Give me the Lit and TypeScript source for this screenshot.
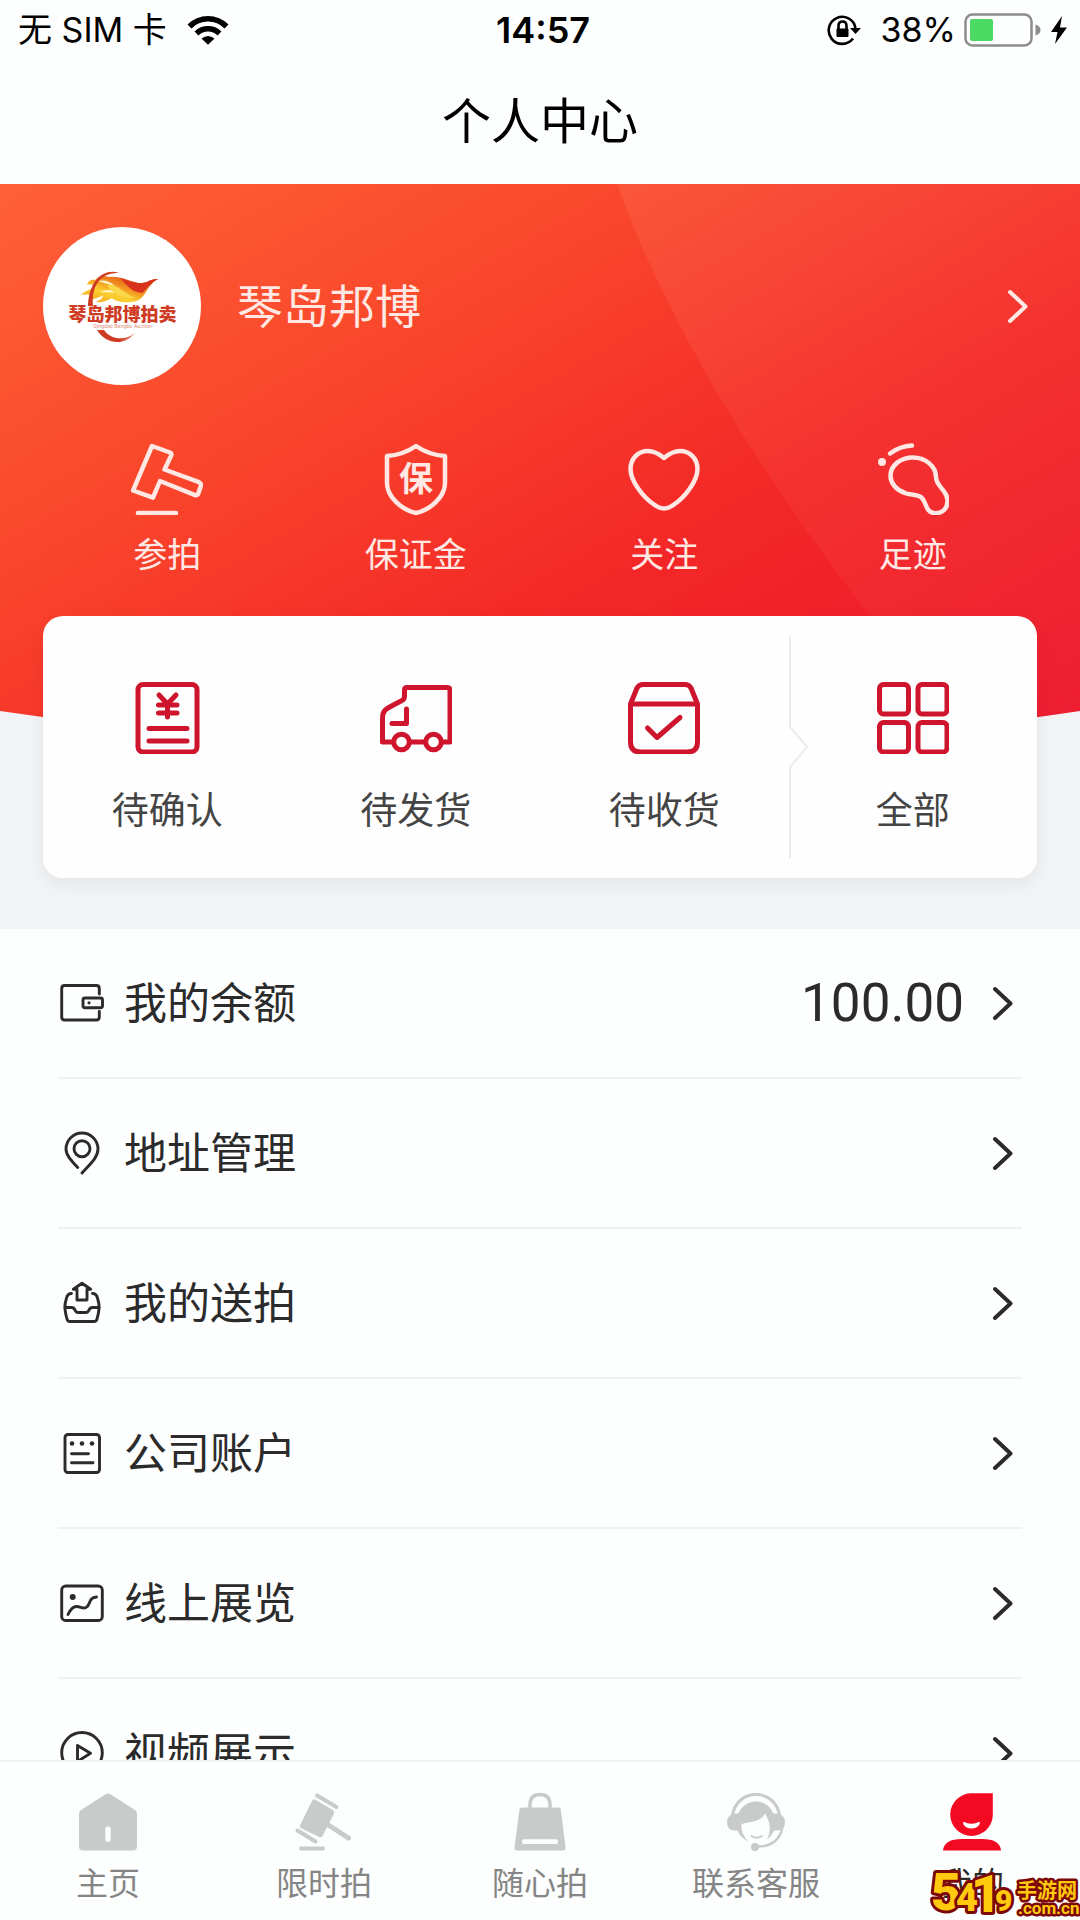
import { LitElement, html, css, TemplateResult } from "lit";
import { customElement, property } from "lit/decorators.js";
import { classMap } from "lit/directives/class-map.js";

interface Entry {
  label: string;
  icon: TemplateResult;
  value?: string;
  active?: boolean;
}

const shortcuts: Entry[] = [
  {
    label: "参拍",
    icon: html`<svg class="icon" viewBox="0 0 72 72" aria-hidden="true">
      <path d="M21 3L39 9.500Q41 10.500 40.200 12.500L33.500 26.500L68 39.200Q70.500 40.500 69.800 43L67.500 50Q66.500 53 63.500 51.800L29 38L22 54.700L2 47.500Z" />
      <path d="M7 70H45" />
    </svg>`,
  },
  {
    label: "保证金",
    icon: html`<svg class="icon" viewBox="0 0 72 72" aria-hidden="true">
      <path d="M36 3Q49 12 65 13V40C65 54 50 67 36 70C22 67 7 54 7 40V13Q23 12 36 3Z" />
      <text class="shield-text" x="36" y="48" text-anchor="middle">保</text>
    </svg>`,
  },
  {
    label: "关注",
    icon: html`<svg class="icon" viewBox="0 0 72 72" aria-hidden="true">
      <path d="M36 15C30 10 25 8 20 8C10 8 2.500 15.500 2.500 26C2.500 38 15 54 26 61.500C30 64.500 33 65.500 36 65.500C39 65.500 42 64.500 46 61.500C57 54 69.500 38 69.500 26C69.500 15.500 62 8 52 8C47 8 42 10 36 15Z" />
    </svg>`,
  },
  {
    label: "足迹",
    icon: html`<svg class="icon" viewBox="0 0 72 72" aria-hidden="true">
      <circle class="solid" cx="5" cy="19" r="4" />
      <path d="M13 10.500Q23 3 35 2.500" />
      <path d="M36 14.500C48 14.500 59 23 59 34C59 44 71 47 70.500 59C70 66 65 70.500 58 70.300C47 69 50 57 43 53.500C38 51 33 52 28 50C19 47 13.500 40 13.500 33C13.500 22 24 14.500 36 14.500Z" />
    </svg>`,
  },
];

const orders: Entry[] = [
  {
    label: "待确认",
    icon: html`<svg class="icon red" viewBox="0 0 72 72" aria-hidden="true">
      <rect x="7" y="2.500" width="59" height="67.500" rx="5" />
      <path d="M28 13L36.500 22L45 13M36.500 22V35M27.500 23H46M27.500 31H46M18 46.500H56M18 59H56" />
    </svg>`,
  },
  {
    label: "待发货",
    icon: html`<svg class="icon red" viewBox="0 0 72 72" aria-hidden="true">
      <path d="M13 60H2.500V36Q2.500 29 8 26Q15 22 22 18.500Q24.500 17.500 24.500 14V8Q24.500 5.500 27 5.500H67Q70 5.500 70 8.500V60H62M30 60H45" />
      <circle cx="21.500" cy="60" r="7.800" />
      <circle cx="53.500" cy="60" r="7.800" />
      <path d="M26.500 27V41.500H12" />
    </svg>`,
  },
  {
    label: "待收货",
    icon: html`<svg class="icon red" viewBox="0 0 72 72" aria-hidden="true">
      <path d="M2.500 22L9 6Q11 2.500 15 2.500H57Q61 2.500 63 6L69.500 22V60Q69.500 70 59.500 70H12.500Q2.500 70 2.500 60ZM2.500 22H69.500" />
      <path d="M19.500 46L29 55.500L52 35.500" />
    </svg>`,
  },
  {
    label: "全部",
    icon: html`<svg class="icon red" viewBox="0 0 72 72" aria-hidden="true">
      <rect x="2.500" y="2.500" width="29" height="29.500" rx="4" />
      <rect x="41" y="2.500" width="29" height="29.500" rx="4" />
      <rect x="2.500" y="40.500" width="29" height="29.500" rx="4" />
      <rect x="41" y="40.500" width="29" height="29.500" rx="4" />
    </svg>`,
  },
];

const menu: Entry[] = [
  {
    label: "我的余额",
    value: "100.00",
    icon: html`<svg class="icon" viewBox="0 0 44 44" aria-hidden="true">
      <path d="M39.300 13V7.500Q39.300 4.500 36.300 4.500H4.700Q1.700 4.500 1.700 7.500V36Q1.700 39 4.700 39H36.300Q39.300 39 39.300 36V30.500" />
      <rect x="23" y="17" width="19.500" height="9.800" rx="2" />
      <circle class="solid" cx="29" cy="21.800" r="1.600" />
    </svg>`,
  },
  {
    label: "地址管理",
    icon: html`<svg class="icon" viewBox="0 0 44 44" aria-hidden="true">
      <path d="M17.700 36.500C11 29.500 6 24 6 18A16 16 0 0 1 38 18C38 27 29 34 22 42" />
      <circle cx="22" cy="17.700" r="8" />
    </svg>`,
  },
  {
    label: "我的送拍",
    icon: html`<svg class="icon" viewBox="0 0 44 44" aria-hidden="true">
      <path d="M22 2.300L30.700 8.300H27V19H17V8.300H13.300Z" />
      <path d="M11.500 12.500Q7.500 12.500 6.500 17Q4.500 23 5 28Q5.500 33 7 38Q7.500 40.500 10 40.500H34Q36.500 40.500 37 38Q38.500 33 39 28Q39.500 23 37.500 17Q36.500 12.500 32.500 12.500" />
      <path d="M5 26.500H11.500Q14 26.500 15 29Q16 31.500 18 31.500H26Q28 31.500 29 29Q30 26.500 32.500 26.500H39" />
    </svg>`,
  },
  {
    label: "公司账户",
    icon: html`<svg class="icon" viewBox="0 0 44 44" aria-hidden="true">
      <rect x="5" y="3.500" width="34.500" height="38" rx="3" />
      <circle class="solid" cx="12" cy="12.500" r="2.300" />
      <circle class="solid" cx="22" cy="12.500" r="2.300" />
      <circle class="solid" cx="32" cy="12.500" r="2.300" />
      <path d="M11.500 22.700H28.500M11.500 31.700H33" />
    </svg>`,
  },
  {
    label: "线上展览",
    icon: html`<svg class="icon" viewBox="0 0 44 44" aria-hidden="true">
      <rect x="1.700" y="5" width="40.600" height="34.500" rx="4" />
      <circle class="solid" cx="12.700" cy="16" r="3" />
      <path d="M8 33.500Q12 25 17 25.500C20 25.800 22 28 26 26.500C31 24 28 16.500 36.500 16" />
    </svg>`,
  },
  {
    label: "视频展示",
    icon: html`<svg class="icon" viewBox="0 0 44 44" aria-hidden="true">
      <circle cx="22" cy="21.800" r="20.300" />
      <path d="M17.500 14.500L30.500 22.300L17.500 30.500Z" />
    </svg>`,
  },
];

const tabs: Entry[] = [
  {
    label: "主页",
    icon: html`<svg class="tab-icon" viewBox="0 0 60 60" aria-hidden="true">
      <path class="fill" fill-rule="evenodd" d="M28 2Q30 .8 32 2L57 18Q59 19.500 59 22V54.500Q59 58.500 55 58.500H5Q1 58.500 1 54.500V22Q1 19.500 3 18ZM30 34.500Q27.300 34.500 27.300 37V47.500Q27.300 50 30 50Q32.700 50 32.700 47.500V37Q32.700 34.500 30 34.500Z" />
    </svg>`,
  },
  {
    label: "限时拍",
    icon: html`<svg class="tab-icon" viewBox="0 0 60 60" aria-hidden="true">
      <path class="fill" d="M21 7.500L39 18Q41 19.300 40 21.500L28.500 44Q27.500 46 25.500 45L7.500 36.500Q5 35 6.200 33L18 9Q19 6.800 21 7.500Z" />
      <path class="line" stroke-width="4" d="M23 3.500L42.500 15M3.500 38.500L21.500 49.500M7 56.500H29" />
      <path class="line" stroke-width="5" d="M32 31.500L54.500 46" />
    </svg>`,
  },
  {
    label: "随心拍",
    icon: html`<svg class="tab-icon" viewBox="0 0 60 60" aria-hidden="true">
      <path class="line" stroke-width="3.500" d="M20 16V13Q20 2.500 30 2.500Q40 2.500 40 13V16" />
      <path class="fill" fill-rule="evenodd" d="M12 15.500H48.500Q50.500 15.500 50.800 17.500L55.500 55Q55.800 58.500 52.500 58.500H7.500Q4.200 58.500 4.500 55L9.500 17.500Q10 15.500 12 15.500ZM14 47.300Q12 47.300 12 49.500Q12 52 14 52H46Q48 52 48 49.500Q48 47.300 46 47.300Z" />
    </svg>`,
  },
  {
    label: "联系客服",
    icon: html`<svg class="tab-icon" viewBox="0 0 60 60" aria-hidden="true">
      <path class="line" stroke-width="3" d="M6 24C9 10 18 2.500 30 2.500C42 2.500 51 10 54 24" />
      <path class="fill" d="M9 21.500H13V38.500H8Q1 38 1 30Q1 23 9 21.500ZM51 21.500H47V38.500H52Q59 38 59 30Q59 23 51 21.500Z" />
      <path class="fill" d="M11 36C9 20 18 9.500 30 9.500C42 9.500 51 20 49 36C47 42 44 45 41 47.500C45 40 45 31 39 21.500C35 30 25 29.500 15.500 32C15 39 17 43 22 49.500C16 46 12 42 11 36Z" />
      <path class="line" stroke-width="2.500" d="M56 37C54 47 46 54.500 32 54.500" />
      <path class="line" stroke-width="1.800" d="M25.500 44Q30.500 47.500 36 44" />
      <circle class="fill" cx="29" cy="55" r="4" />
    </svg>`,
  },
  {
    label: "我的",
    active: true,
    icon: html`<svg class="tab-icon" viewBox="0 0 60 60" aria-hidden="true">
      <path class="fill" fill-rule="evenodd" d="M30 1.300H50.800V22.500A21.300 21.300 0 1 1 30 1.300ZM22 30Q20.500 30 21.500 32.500Q24 36.500 29.500 36.500Q35 36.500 37.500 32.500Q38.500 30 37 30Q35.500 30 34.500 31Q29.500 32.500 24.500 31Q23.500 30 22 30Z" />
      <path class="fill" d="M1 58.500Q2 47 20 47H40Q58 47 59 58.500Z" />
    </svg>`,
  },
];

@customElement("status-bar")
class StatusBar extends LitElement {
  static styles = css`
    :host {
      display: grid;
      grid-template-columns: 1fr auto 1fr;
      align-items: center;
      height: 60px;
      padding: 0 12px 0 18px;
      font-size: 34px;
      line-height: 40px;
      color: #000;
    }
    .side {
      display: flex;
      align-items: center;
      gap: 20px;
    }
    .right {
      justify-content: flex-end;
      gap: 8px;
    }
    .time {
      font-size: 36px;
      font-weight: 600;
    }
    .wifi {
      width: 42px;
      height: 30px;
    }
    .lock {
      width: 34px;
      height: 32px;
      margin-right: 12px;
    }
    .battery {
      width: 78px;
      height: 34px;
    }
    .bolt {
      width: 18px;
      height: 28px;
    }
  `;

  render() {
    return html`
      <div class="side">
        <span>无 SIM 卡</span>
        <svg class="wifi" viewBox="0 0 42 30" aria-hidden="true">
          <g fill="none" stroke="#000" stroke-width="5.500">
            <path d="M2.500 11.500A26 26 0 0 1 39.500 11.500" />
            <path d="M9.500 18.500A16.500 16.500 0 0 1 32.500 18.500" />
          </g>
          <path d="M14.500 23.500Q21 18.500 27.500 23.500L21 29.800Z" />
        </svg>
      </div>
      <span class="time">14:57</span>
      <div class="side right">
        <svg class="lock" viewBox="0 0 34 32" aria-hidden="true">
          <g fill="none" stroke="#000" stroke-width="2.600">
            <path d="M28.500 14A13.500 13.500 0 1 0 26 24.500" />
            <path d="M11.500 16V12Q11.500 7.500 15.500 7.500Q19.500 7.500 19.500 12V16" />
          </g>
          <rect x="9.500" y="14.500" width="12" height="8.500" rx="1" />
          <path d="M23 14H34L28.500 20Z" />
        </svg>
        <span>38%</span>
        <svg class="battery" viewBox="0 0 78 34" aria-hidden="true">
          <rect x="1.500" y="1.500" width="66" height="31" rx="7" fill="none" stroke="#8c8c8c" stroke-width="2.500" />
          <rect x="6" y="6" width="23" height="22" rx="2" fill="#4cd964" />
          <path d="M71.500 11.500Q76.500 13 76.500 17Q76.500 21 71.500 22.500Z" fill="#8c8c8c" />
        </svg>
        <svg class="bolt" viewBox="0 0 18 28" aria-hidden="true">
          <path d="M12 0L1 16H7.500L5 28L17 11.500H10Z" />
        </svg>
      </div>
    `;
  }
}

@customElement("brand-avatar")
class BrandAvatar extends LitElement {
  static styles = css`
    :host {
      display: block;
      width: 158px;
      height: 158px;
      border-radius: 50%;
      background: #fff;
      overflow: hidden;
    }
    .art {
      display: block;
      width: 100%;
      height: 100%;
    }
    .name {
      font-size: 18px;
      font-weight: 900;
      fill: #cf3a22;
    }
    .latin {
      font-size: 5px;
      fill: #e08a72;
    }
  `;

  render() {
    return html`
      <svg class="art" viewBox="0 0 158 158" role="img" aria-label="琴岛邦博拍卖">
        <defs>
          <linearGradient id="flame" x1="0" y1="1" x2="1" y2="0">
            <stop offset="0" stop-color="#f39a1c" />
            <stop offset=".35" stop-color="#fbd02e" />
            <stop offset=".65" stop-color="#ee7a1c" />
            <stop offset="1" stop-color="#cf2a1c" />
          </linearGradient>
          <linearGradient id="crescent" x1="0" y1="0" x2="1" y2="0">
            <stop offset="0" stop-color="#cf3a22" />
            <stop offset=".6" stop-color="#cf3a22" />
            <stop offset="1" stop-color="#e9a08e" />
          </linearGradient>
        </defs>
        <path fill="url(#flame)" d="M115 52C108 51 104 57 95 56C86 54 78 49 66 50C60 48 56 49 52 53C47 52 45 55 44 58C49 57 51 58 53 60C47 62 43 64 37 68C43 67 46 68 50 68L47 74C53 70 57 71 60 68C60 71 57 73 53 75C60 76 65 73 69 71C72 74 80 76 88 75C102 74 102 63 108 58Q111 54 115 52Z" />
        <path fill="#fff3c4" d="M55 54Q64 52 72 59Q60 56 55 54ZM57 65Q66 60 78 67Q66 65 57 65Z" />
        <path fill="#fbd84a" d="M64 58C74 56 80 66 92 71C80 72 70 68 64 58Z" />
        <path fill="#d8321c" d="M115 52C108 51 104 57 95 56C88 55 84 53 77 51C84 58 88 65 99 66C104 62 105 57 115 52Z" />
        <path fill="#cf3a22" d="M76 46C62 41 46 52 45 79H50C48 56 60 45 76 46Z" />
        <path fill="url(#crescent)" d="M54 103C63 118 82 119 92 106C82 114 68 113 61 103Z" />
        <text class="name" x="79.500" y="94" text-anchor="middle">琴岛邦博拍卖</text>
        <text class="latin" x="79.500" y="101" text-anchor="middle">Qingdao Bangbo Auction</text>
      </svg>
    `;
  }
}

@customElement("icon-action")
class IconAction extends LitElement {
  @property({ attribute: false }) entry!: Entry;
  @property({ type: Boolean, reflect: true }) card = false;

  static styles = css`
    :host {
      display: block;
    }
    .action {
      display: flex;
      flex-direction: column;
      align-items: center;
      gap: 20px;
      width: 100%;
      padding: 0;
      border: 0;
      background: none;
      color: #ffe8e3;
      font: inherit;
      font-size: 34px;
      line-height: 40px;
      cursor: pointer;
    }
    .card {
      gap: 37px;
      color: #444;
      font-size: 37px;
    }
    .icon {
      width: 72px;
      height: 72px;
      fill: none;
      stroke: #ffe8e3;
      stroke-width: 4.500;
      stroke-linecap: round;
      stroke-linejoin: round;
    }
    .red {
      stroke: #cf152d;
      stroke-width: 5;
    }
    .solid {
      fill: #ffe8e3;
      stroke: none;
    }
    .shield-text {
      fill: #ffe8e3;
      stroke: none;
      font-size: 34px;
      font-weight: 600;
    }
  `;

  render() {
    return html`
      <button class=${classMap({ action: true, card: this.card })} type="button">
        ${this.entry.icon}
        <span>${this.entry.label}</span>
      </button>
    `;
  }
}

@customElement("app-root")
class AppRoot extends LitElement {
  static styles = css`
    :host {
      display: flex;
      flex-direction: column;
      position: relative;
      height: 100vh;
      overflow: hidden;
      background: #fdfefe;
      color: #2b2b2b;
      font-family: Inter, "Noto Sans CJK SC", sans-serif;
    }
    .title {
      flex: none;
      margin: 0;
      color: #000;
      font-size: 49px;
      font-weight: 400;
      line-height: 124px;
      text-align: center;
    }
    .content {
      flex: 1;
      min-height: 0;
      overflow: hidden;
    }
    .hero {
      position: relative;
      display: flex;
      flex-direction: column;
      padding: 43px 43px 51px;
      background: #f2f3f5;
    }
    .backdrop {
      position: absolute;
      inset: 0 0 auto;
      width: 100%;
      height: 568px;
    }
    .profile {
      position: relative;
      display: flex;
      align-items: center;
      gap: 36px;
      padding-right: 8px;
      color: #ffe8e3;
      font-size: 46px;
      line-height: 56px;
      text-decoration: none;
    }
    .profile-name {
      flex: 1;
    }
    .chevron {
      width: 22px;
      height: 34px;
      fill: none;
      stroke: currentColor;
      stroke-width: 4;
      stroke-linecap: round;
      stroke-linejoin: round;
    }
    .shortcuts {
      position: relative;
      display: grid;
      grid-template-columns: repeat(4, 1fr);
      margin: 58px 0 41px;
    }
    .orders {
      position: relative;
      display: grid;
      grid-template-columns: repeat(4, 1fr);
      padding: 66px 0 47px;
      border-radius: 20px;
      background: #fefefe;
      box-shadow: 0 6px 18px rgba(0, 0, 0, 0.06);
    }
    .divider {
      position: absolute;
      top: 20px;
      left: 75%;
      width: 20px;
      height: 222px;
      fill: none;
      stroke: #ececec;
      stroke-width: 2;
    }
    .menu {
      margin: 0;
      padding: 0 58px;
      list-style: none;
    }
    .menu-row {
      display: flex;
      align-items: center;
      gap: 20px;
      height: 148px;
      padding: 0 8px 0 2px;
      border-bottom: 2px solid #f0f1f1;
      color: inherit;
      font-size: 43px;
      line-height: 60px;
      text-decoration: none;
    }
    .menu-label {
      flex: 1;
    }
    .menu-value {
      margin-right: 8px;
      font-family: Roboto, sans-serif;
      font-size: 53px;
    }
    .icon {
      width: 44px;
      height: 44px;
      fill: none;
      stroke: #2b2b2b;
      stroke-width: 2.900;
      stroke-linecap: round;
      stroke-linejoin: round;
    }
    .solid {
      fill: #2b2b2b;
      stroke: none;
    }
    .tabs {
      flex: none;
      display: grid;
      grid-template-columns: repeat(5, 1fr);
      height: 158px;
      border-top: 2px solid #f2f3f3;
      background: #fdfefe;
    }
    .tab {
      display: flex;
      flex-direction: column;
      align-items: center;
      gap: 12px;
      padding-top: 30px;
      color: #858585;
      font-size: 32px;
      line-height: 40px;
      text-decoration: none;
    }
    .active {
      color: #2b2b2b;
    }
    .tab-icon {
      width: 60px;
      height: 60px;
    }
    .fill {
      fill: #c9caca;
    }
    .line {
      fill: none;
      stroke: #c9caca;
      stroke-linecap: round;
    }
    .active .fill {
      fill: #f30a22;
    }
    .badge {
      position: absolute;
      right: 0;
      bottom: 0;
      width: 152px;
      height: 56px;
    }
    .badge-text {
      fill: #ffc90e;
      stroke: #7d0808;
      stroke-width: 6;
      stroke-linejoin: round;
      paint-order: stroke;
      font-family: Roboto, "Noto Sans CJK SC", sans-serif;
      font-weight: 900;
    }
    .digit-large {
      font-size: 52px;
    }
    .digit-medium {
      font-size: 38px;
    }
    .digit-small {
      font-size: 30px;
    }
    .site {
      font-size: 20px;
      font-weight: 700;
      stroke-width: 5;
    }
    .domain {
      font-size: 17px;
      font-weight: 700;
      stroke-width: 5;
    }
  `;

  private chevron() {
    return html`<svg class="chevron" viewBox="0 0 22 34" aria-hidden="true">
      <path d="M3 3L18.500 17.500L3 32" />
    </svg>`;
  }

  render() {
    return html`
      <status-bar></status-bar>
      <h1 class="title">个人中心</h1>
      <main class="content">
        <section class="hero">
          <svg class="backdrop" viewBox="0 0 1080 568" preserveAspectRatio="none" aria-hidden="true">
            <defs>
              <linearGradient id="base" gradientUnits="userSpaceOnUse" x1="0" y1="0" x2="540" y2="940">
                <stop offset="0" stop-color="#ff6038" />
                <stop offset=".26" stop-color="#fa4b2c" />
                <stop offset=".6" stop-color="#f32727" />
                <stop offset="1" stop-color="#eb1430" />
              </linearGradient>
              <linearGradient id="sheen" gradientUnits="userSpaceOnUse" x1="640" y1="0" x2="960" y2="540">
                <stop offset="0" stop-color="#ff9a80" stop-opacity=".16" />
                <stop offset="1" stop-color="#ff7a6a" stop-opacity=".06" />
              </linearGradient>
            </defs>
            <path fill="url(#base)" d="M0 0H1080V527Q540 608 0 527Z" />
            <path fill="url(#sheen)" d="M617 0C660 120 740 260 850 406Q895 465 960 543L1080 527V0Z" />
          </svg>
          <a class="profile" href="#profile">
            <brand-avatar></brand-avatar>
            <span class="profile-name">琴岛邦博</span>
            ${this.chevron()}
          </a>
          <div class="shortcuts">
            ${shortcuts.map((entry) => html`<icon-action .entry=${entry}></icon-action>`)}
          </div>
          <div class="orders">
            ${orders.map((entry) => html`<icon-action card .entry=${entry}></icon-action>`)}
            <svg class="divider" viewBox="0 0 20 222" aria-hidden="true">
              <path d="M1 0V91L18 111L1 131V222" />
            </svg>
          </div>
        </section>
        <ul class="menu">
          ${menu.map(
            (entry) => html`<li>
              <a class="menu-row" href="#menu">
                ${entry.icon}
                <span class="menu-label">${entry.label}</span>
                ${entry.value ? html`<span class="menu-value">${entry.value}</span>` : null}
                ${this.chevron()}
              </a>
            </li>`
          )}
        </ul>
      </main>
      <nav class="tabs">
        ${tabs.map(
          (entry) => html`<a class=${classMap({ tab: true, active: !!entry.active })} href="#tab">
            ${entry.icon}
            <span>${entry.label}</span>
          </a>`
        )}
      </nav>
      <svg class="badge" viewBox="0 0 152 56" role="img" aria-label="5419手游网.com.cn">
        <text class="badge-text digit-large" x="3" y="46">5</text>
        <text class="badge-text digit-medium" x="28" y="47">4</text>
        <text class="badge-text digit-large" x="43" y="48">1</text>
        <text class="badge-text digit-small" x="67" y="47">9</text>
        <text class="badge-text domain" x="90" y="50">.com.cn</text>
        <text class="badge-text site" x="89" y="34">手游网</text>
      </svg>
    `;
  }
}
